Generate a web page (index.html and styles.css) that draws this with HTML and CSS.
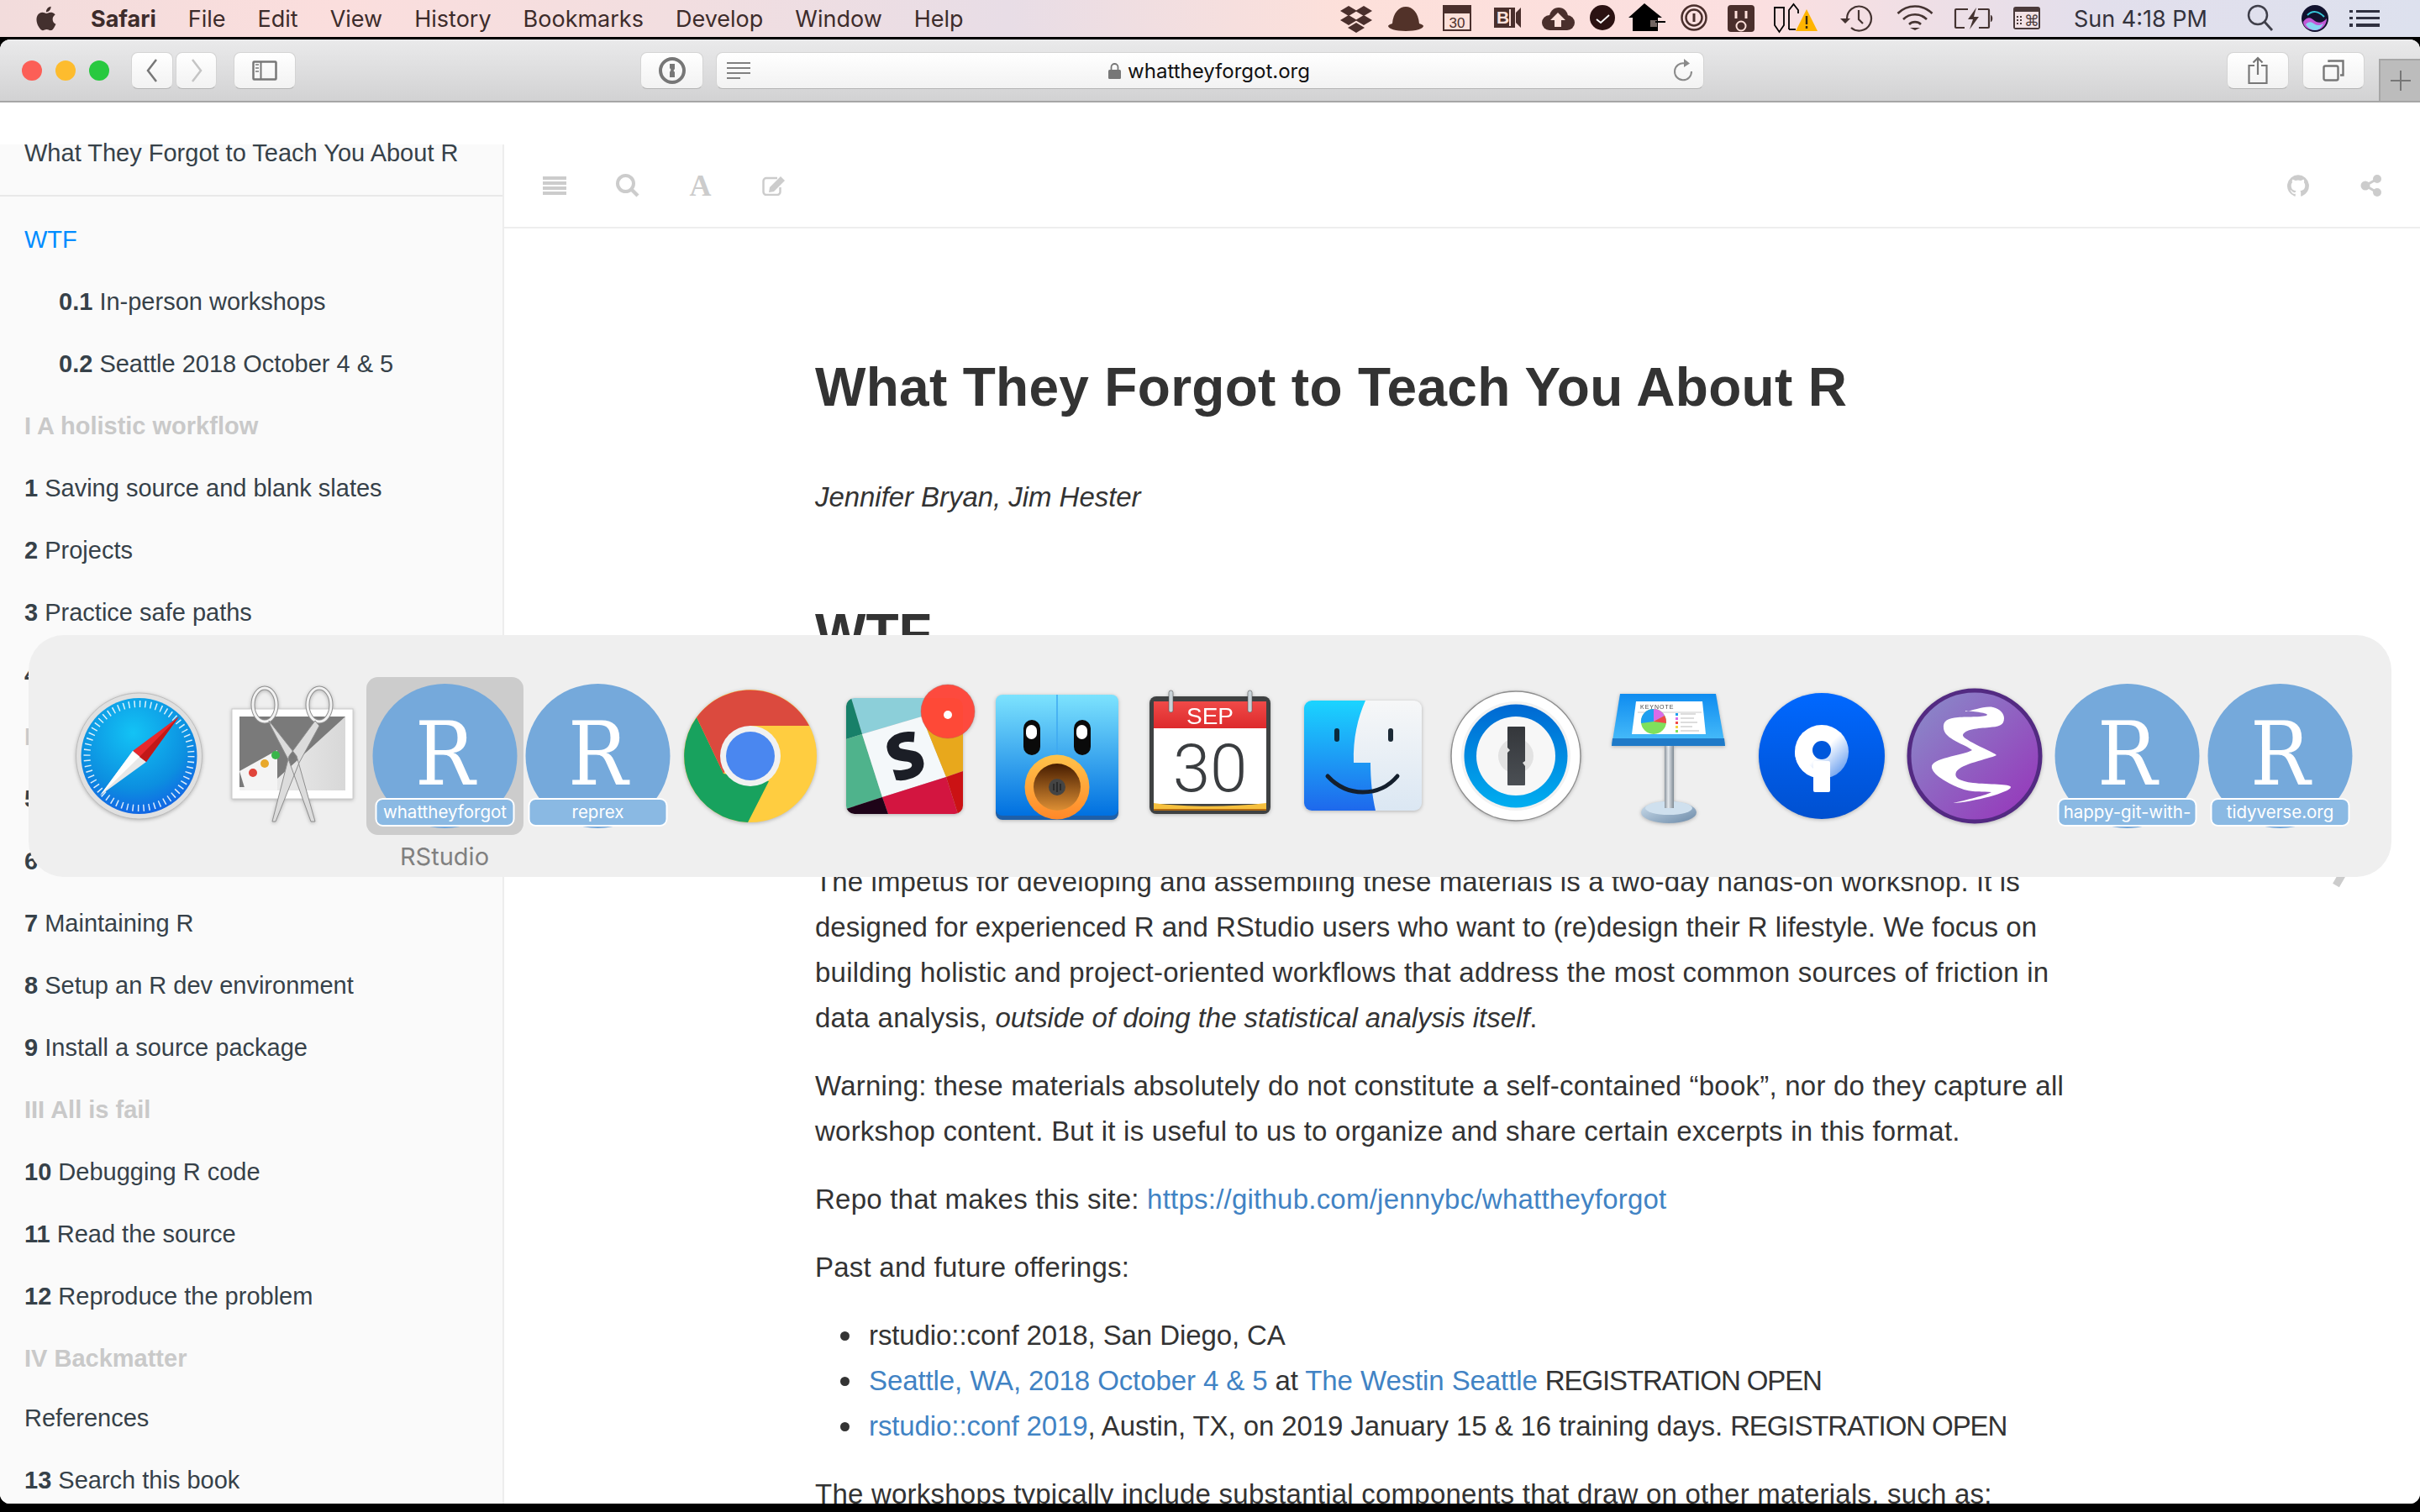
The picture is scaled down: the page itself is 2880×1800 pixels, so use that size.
FILE: index.html
```html
<!DOCTYPE html>
<html lang="en">
  <head>
    <meta charset="UTF-8" />
    <title>What They Forgot to Teach You About R</title>
    <link rel="stylesheet" href="styles.css">
  </head>
  <body>
    <header class="menubar">
      <svg class="apple" viewBox="0 0 24 24" width="34" height="34"><path fill="#43302e" d="M18.71 19.5c-.83 1.24-1.71 2.45-3.05 2.47-1.34.03-1.77-.79-3.29-.79-1.53 0-2 .77-3.27.82-1.31.05-2.3-1.32-3.14-2.53C4.25 17 2.94 12.45 4.7 9.39c.87-1.52 2.43-2.48 4.12-2.51 1.28-.02 2.5.87 3.29.87.78 0 2.26-1.07 3.81-.91.65.03 2.47.26 3.64 1.98-.09.06-2.17 1.28-2.15 3.81.03 3.02 2.65 4.03 2.68 4.04-.03.07-.42 1.44-1.38 2.83M13 3.5c.73-.83 1.94-1.46 2.94-1.5.13 1.17-.34 2.35-1.04 3.19-.69.85-1.83 1.51-2.95 1.42-.15-1.15.41-2.35 1.05-3.11z"/></svg>
      <nav class="menus">
        <b>Safari</b><span>File</span><span>Edit</span><span>View</span><span>History</span><span>Bookmarks</span><span>Develop</span><span>Window</span><span>Help</span>
      </nav>
      <svg class="status" width="850" height="44" viewBox="1590 0 850 44">
        <g fill="#4a2f2c">
          <path d="M1605 7l10 6-10 6-10-6zM1623 7l10 6-10 6-10-6zM1605 18l10 6-10 6-10-6zM1623 18l10 6-10 6-10-6zM1614 27l10 6-10 6-10-6z"/>
          <path fill="#523229" d="M1657 28c1-13 8-20 16-20s15 7 16 20c3 1 5 2 5 3 0 3-9 6-21 6s-21-3-21-6c0-1 2-2 5-3z"/>
          <path d="M1717 6h34v31h-34z"/>
          <path fill="#fde0da" d="M1719 16h30v19h-30z"/>
          <text class="st-num" x="1734" y="33" text-anchor="middle">30</text>
          <path d="M1778 9h25v24h-25zM1804 15l6-6v24l-6-6z"/>
          <text class="st-bi" x="1781" y="28">B</text>
          <path fill="#fde0da" d="M1796 11h2v20h-2z"/>
          <circle cx="1844" cy="27" r="9"/><circle cx="1855" cy="20" r="11"/><circle cx="1865" cy="27" r="9"/>
          <path d="M1844 25h21v11h-21z"/>
          <path fill="#fde0da" d="M1854 15l9 9h-5v8h-8v-8h-5z"/>
          <circle cx="1907" cy="21" r="15" fill="#2b1212"/>
          <path d="M1900 23l5 4 10-9" fill="none" stroke="#fff" stroke-width="1.8"/>
          <path fill="#000" d="M1957 4l21 17h-5v16h-30V21h-5z"/>
          <path d="M1964 24h8v8h-8z" fill="#fde0da" opacity=".45"/>
          <path d="M1970 26h12" stroke="#000" stroke-width="2"/>
          <circle cx="2016" cy="21" r="14.5" fill="none" stroke="#4a2f2c" stroke-width="2.5"/>
          <circle cx="2016" cy="21" r="9.5" fill="none" stroke="#4a2f2c" stroke-width="2.5"/>
          <path d="M2016 16v10" stroke="#4a2f2c" stroke-width="3"/>
          <rect x="2056" y="6" width="32" height="32" rx="4"/>
          <path d="M2066 13v9M2078 13v9" stroke="#fde0da" stroke-width="3"/>
          <circle cx="2072" cy="31" r="5.5" fill="none" stroke="#fde0da" stroke-width="2"/>
        </g>
        <path d="M2112 9h11v21l-5.500 8-5.500-8zM2129 35V12l5.500-7 5.500 7v4" fill="none" stroke="#000" stroke-width="1.800"/>
        <path d="M2129 35h8" stroke="#000" stroke-width="1.800"/>
        <path d="M2150 11l13 26h-26z" fill="#ffb400"/>
        <path d="M2150 19v10M2150 31v3" stroke="#3a2a10" stroke-width="2.400"/>
        <g fill="none" stroke="#443331" stroke-width="2.200">
          <path d="M2198 22a14.500 14.500 0 1 1 5 11M2212 12v11l5 5"/>
          <path stroke-width="2.600" d="M2258.500 16a29 29 0 0 1 41 0M2265 23a20 20 0 0 1 28 0M2272 29a10 10 0 0 1 14 0"/>
          <path d="M2342 11h-14a1 1 0 0 0-1 1v20a1 1 0 0 0 1 1h10M2354 11h12a1 1 0 0 1 1 1v20a1 1 0 0 1-1 1h-11"/>
        </g>
        <path d="M2190 22h12l-6 6z" fill="#443331"/>
        <path d="M2273 33h12l-6 3z" fill="#443331"/>
        <path d="M2352 9l-10 14h6l-4 12 11-15h-6z" fill="#443331"/>
        <path d="M2369 18c3 0 3 8 0 8z" fill="#443331"/>
        <rect x="2396" y="8" width="32" height="27" rx="3" fill="#4a3a3a"/>
        <rect x="2398" y="14" width="28" height="19" fill="#f2e2e6"/>
        <text class="st-cmd" x="2418" y="31" text-anchor="middle">⌘</text>
        <path d="M2401 19v12M2405 19v12" stroke="#4a3a3a" stroke-width="2" stroke-dasharray="2 2"/>
      </svg>
      <time class="clock">Sun 4:18 PM</time>
      <svg class="tray-search" width="32" height="34" viewBox="0 0 32 34"><circle cx="13" cy="13" r="11" fill="none" stroke="#3f3f4a" stroke-width="2.500"/><path d="M21 21l9 10" stroke="#3f3f4a" stroke-width="2.800"/></svg>
      <svg class="siri" width="34" height="34" viewBox="0 0 34 34">
        <circle cx="17" cy="17" r="16" fill="#11122e"/>
        <path d="M3 21c6-8 10-4 14-1s10 2 14-3c0 8-6 14-14 14S3 27 3 21z" fill="#c15ad6"/>
        <path d="M6 24c5-5 8-2 11 0s7 1 10-1c-2 5-6 8-10 8s-9-3-11-7z" fill="#87d6f2"/>
        <path d="M8 13c6-6 13-5 20 2" fill="none" stroke="#36c6d8" stroke-width="2"/>
      </svg>
      <svg class="tray-list" width="36" height="20" viewBox="0 0 36 20"><path fill="#2f3040" d="M0 0h4v3H0zM8 0h28v3H8zM0 8h4v3H0zM8 8h28v3H8zM0 16h4v4H0zM8 16h28v4H8z"/></svg>
    </header>

    <div class="window">
      <div class="toolbar">
        <span class="light red"></span><span class="light yellow"></span><span class="light green"></span>
        <button class="btn back"><svg width="16" height="30" viewBox="0 0 16 30"><path d="M13 2L3 15l10 13" fill="none" stroke="#777" stroke-width="2.500"/></svg></button>
        <button class="btn forward"><svg width="16" height="30" viewBox="0 0 16 30"><path d="M3 2l10 13L3 28" fill="none" stroke="#c4c4c4" stroke-width="2.500"/></svg></button>
        <button class="btn sidebar-toggle"><svg width="30" height="24" viewBox="0 0 30 24"><rect x="1.500" y="1.500" width="27" height="21" rx="1" fill="none" stroke="#777" stroke-width="2.500"/><path d="M10.500 2v20" stroke="#777" stroke-width="2"/><path d="M4 5h4M4 9h4M4 13h4" stroke="#999" stroke-width="2"/></svg></button>
        <button class="btn onepass"><svg width="32" height="32" viewBox="0 0 32 32"><circle cx="16" cy="16" r="14" fill="none" stroke="#777" stroke-width="4"/><path fill="#777" d="M13 8h6v6l-1.500 2 1.500 2v6h-6v-6l1.500-3L13 13z"/></svg></button>
        <div class="urlbar">
          <svg class="reader" width="28" height="20" viewBox="0 0 28 20"><path d="M0 1h28M0 7h28M0 13h28M0 19h16" stroke="#808080" stroke-width="2"/></svg>
          <span class="address">
            <svg width="15" height="19" viewBox="0 0 15 19"><path d="M3.500 8V5a4 4 0 0 1 8 0v3" fill="none" stroke="#777" stroke-width="1.800"/><rect x="0" y="8" width="15" height="11" rx="1.500" fill="#777"/></svg>
            whattheyforgot.org
          </span>
          <svg class="reload" width="24" height="28" viewBox="0 0 24 28"><path d="M14 5.500a10 10 0 1 0 8 9.500" fill="none" stroke="#8a8a8a" stroke-width="2"/><path d="M13 0l7 5.500-7 4.500z" fill="#8a8a8a"/></svg>
        </div>
        <button class="btn share"><svg width="24" height="34" viewBox="0 0 24 34"><path d="M8 11H1.500v21h21V11H16M12 22V2M6.500 7.500L12 2l5.500 5.500" fill="none" stroke="#777" stroke-width="2.200"/></svg></button>
        <button class="btn tabs"><svg width="26" height="26" viewBox="0 0 26 26"><rect x="1.500" y="7.500" width="17" height="17" rx="2" fill="none" stroke="#777" stroke-width="2.400"/><path d="M7.500 3V1.500h17v17H21" fill="none" stroke="#777" stroke-width="2.400"/></svg></button>
        <div class="newtab"><svg width="24" height="24" viewBox="0 0 24 24"><path d="M12 0v24M0 12h24" stroke="#777" stroke-width="2"/></svg></div>
      </div>

      <div class="page">
        <aside class="summary">
          <div class="book-title">What They Forgot to Teach You About R</div>
          <ul class="chapters">
            <li class="active">WTF</li>
            <li class="sub"><b>0.1</b> In-person workshops</li>
            <li class="sub"><b>0.2</b> Seattle 2018 October 4 &amp; 5</li>
            <li class="part">I A holistic workflow</li>
            <li><b>1</b> Saving source and blank slates</li>
            <li><b>2</b> Projects</li>
            <li><b>3</b> Practice safe paths</li>
            <li><b>4</b> Project-oriented workflow</li>
            <li class="part">II Personal R administration</li>
            <li><b>5</b> R startup</li>
            <li><b>6</b> Tricks</li>
            <li><b>7</b> Maintaining R</li>
            <li><b>8</b> Setup an R dev environment</li>
            <li><b>9</b> Install a source package</li>
            <li class="part">III All is fail</li>
            <li><b>10</b> Debugging R code</li>
            <li><b>11</b> Read the source</li>
            <li><b>12</b> Reproduce the problem</li>
            <li class="part">IV Backmatter</li>
            <li class="refs">References</li>
            <li><b>13</b> Search this book</li>
          </ul>
        </aside>

        <main class="body">
          <div class="book-tools">
            <span class="tool"><svg width="28" height="22" viewBox="0 0 28 22"><path fill="#ccc" d="M0 0h28v4H0zM0 6h28v4H0zM0 12h28v4H0zM0 18h28v4H0z"/></svg></span>
            <span class="tool"><svg width="28" height="28" viewBox="0 0 28 28"><circle cx="11.500" cy="11.500" r="9.500" fill="none" stroke="#ccc" stroke-width="4"/><path d="M18 18l8 8" stroke="#ccc" stroke-width="4.500"/></svg></span>
            <span class="tool tool-a">A</span>
            <span class="tool"><svg width="28" height="24" viewBox="0 0 28 24"><path d="M18 3H5a3.500 3.500 0 0 0-3.500 3.500v13A3.500 3.500 0 0 0 5 23h13a3.500 3.500 0 0 0 3.500-3.500V14" fill="none" stroke="#ccc" stroke-width="2.500"/><path fill="#ccc" d="M9 14L22 1l5 5-13 13-6 1z"/></svg></span>
            <span class="tools-right">
              <span class="tool"><svg width="26" height="26" viewBox="0 0 24 24"><path fill="#ccc" d="M12 .3a12 12 0 0 0-3.800 23.380c.6.12.83-.26.83-.57L9 21.070c-3.340.72-4.040-1.610-4.040-1.610-.55-1.390-1.340-1.760-1.340-1.760-1.080-.74.09-.73.09-.73 1.200.09 1.830 1.240 1.830 1.240 1.080 1.830 2.810 1.300 3.500 1 .1-.78.42-1.310.76-1.610-2.670-.3-5.470-1.330-5.470-5.930 0-1.310.47-2.380 1.240-3.220-.14-.3-.54-1.520.1-3.180 0 0 1-.32 3.300 1.230a11.500 11.500 0 0 1 6 0c2.280-1.550 3.290-1.230 3.290-1.230.64 1.660.24 2.880.12 3.180a4.650 4.650 0 0 1 1.230 3.220c0 4.610-2.800 5.630-5.480 5.920.42.36.81 1.100.81 2.220l-.01 3.290c0 .31.2.69.82.57A12 12 0 0 0 12 .3"/></svg></span>
              <span class="tool"><svg width="26" height="26" viewBox="0 0 26 26"><path d="M20 5L6 13l14 8" fill="none" stroke="#ccc" stroke-width="3"/><circle cx="20" cy="5" r="5" fill="#ccc"/><circle cx="6" cy="13" r="5.500" fill="#ccc"/><circle cx="20" cy="21" r="5" fill="#ccc"/></svg></span>
            </span>
          </div>

          <article class="inner">
            <h1>What They Forgot to Teach You About R</h1>
            <p class="author"><em>Jennifer Bryan, Jim Hester</em></p>
            <h2>WTF</h2>
            <p><span class="tight">The impetus for developing and assembling these materials is a two-day hands-on workshop. It is</span><br><span class="tighter">designed for experienced R and RStudio users who want to (re)design their R lifestyle. We focus on</span><br>building holistic and project-oriented workflows that address the most common sources of friction in<br>data analysis, <em>outside of doing the statistical analysis itself</em>.</p>
            <p>Warning: these materials absolutely do not constitute a self-contained “book”, nor do they capture all<br>workshop content. But it is useful to us to organize and share certain excerpts in this format.</p>
            <p>Repo that makes this site: <a href="#">https://github.com/jennybc/whattheyforgot</a></p>
            <p>Past and future offerings:</p>
            <ul>
              <li>rstudio::conf 2018, San Diego, CA</li>
              <li><a href="#">Seattle, WA, 2018 October 4 &amp; 5</a> at <a href="#">The Westin Seattle</a> <span class="caps">REGISTRATION OPEN</span></li>
              <li><a href="#">rstudio::conf 2019</a>, Austin, TX, on 2019 January 15 &amp; 16 training days. <span class="caps">REGISTRATION OPEN</span></li>
            </ul>
            <p>The workshops typically include substantial components that draw on other materials, such as:</p>
          </article>

          <svg class="next-page" width="40" height="110" viewBox="0 0 40 110"><path d="M4 4l30 50L4 106" fill="none" stroke="#ccc" stroke-width="9"/></svg>
        </main>
      </div>
    </div>

    <!-- cmd-tab switcher -->
    <div class="switcher">
      <svg class="defs" width="0" height="0">
        <g id="r-app">
          <circle cx="91.500" cy="94" r="86" fill="#75a9db"/>
          <text class="r-letter" transform="translate(91.500 128) scale(.9 1)" text-anchor="middle">R</text>
          <rect x="9.500" y="145" width="164" height="32" rx="8" fill="#8ab9e3" stroke="#fff" stroke-width="2"/>
        </g>
      </svg>

      <div class="app">
        <svg viewBox="0 0 182 188">
          <defs><radialGradient id="saf" cx=".45" cy=".3" r=".8"><stop offset="0" stop-color="#13c3f5"/><stop offset=".6" stop-color="#0c8fe0"/><stop offset="1" stop-color="#1454e6"/></radialGradient></defs>
          <circle cx="91.500" cy="94" r="75" fill="#e0e0e0" stroke="#bbb"/>
          <circle cx="91.500" cy="94" r="69" fill="url(#saf)"/>
          <circle cx="91.500" cy="94" r="62" fill="none" stroke="#fff" stroke-opacity=".85" stroke-width="8" stroke-dasharray="1.500 4.990"/>
          <path d="M139 47L84 88l16 13z" fill="#e8282c"/>
          <path d="M45 141l39-53 16 13z" fill="#e8e8e8"/>
          <path d="M139 47L92 95l8 6z" fill="#c21818"/>
          <path d="M45 141l47-46-8-7z" fill="#fff"/>
        </svg>
      </div>

      <div class="app">
        <svg viewBox="0 0 182 188">
          <defs><linearGradient id="snapr" x1="0" x2="1"><stop offset="0" stop-color="#f2f2f2"/><stop offset="1" stop-color="#d8d8d8"/></linearGradient></defs>
          <rect x="20" y="38" width="144" height="107" fill="#fff" stroke="#ccc"/>
          <rect x="29" y="47" width="126" height="88" fill="url(#snapr)"/>
          <path d="M29 47h126l-92 84H29z" fill="#7a7a7a"/>
          <path d="M29 112l45-25 0 48H36z" fill="#f4f4f4"/>
          <circle cx="45" cy="114" r="5" fill="#e0443a"/><circle cx="59" cy="103" r="5" fill="#e8a82a"/><circle cx="72" cy="93" r="5" fill="#39b54a"/>
          <g fill="none">
            <ellipse cx="59" cy="33" rx="14" ry="20" stroke="#8e8e8e" stroke-width="5"/>
            <ellipse cx="124" cy="33" rx="14" ry="20" stroke="#8e8e8e" stroke-width="5"/>
            <ellipse cx="59" cy="33" rx="14" ry="20" stroke="#f2f2f2" stroke-width="3"/>
            <ellipse cx="124" cy="33" rx="14" ry="20" stroke="#f2f2f2" stroke-width="3"/>
          </g>
          <path d="M64 52l33 42 22 78-5 0-26-72-22-42zM119 52L88 94 68 172l4 0 28-70 24-44z" fill="#dcdcdc" stroke="#8e8e8e"/>
          <circle cx="92" cy="94" r="3" fill="#777"/>
        </svg>
      </div>

      <div class="app selected">
        <svg class="flat" viewBox="0 0 182 188"><use href="#r-app"/><text class="r-label" x="91.500" y="168" text-anchor="middle">whattheyforgot</text></svg>
        <div class="app-name">RStudio</div>
      </div>

      <div class="app">
        <svg class="flat" viewBox="0 0 182 188"><use href="#r-app"/><text class="r-label" x="91.500" y="168" text-anchor="middle">reprex</text></svg>
      </div>

      <div class="app">
        <svg viewBox="0 0 182 188">
          <circle cx="91" cy="94" r="79" fill="#ffcd40"/>
          <path d="M27 48A79 79 0 0 0 88 173L113 124 59 115z" fill="#18a25e"/>
          <path d="M27 48A79 79 0 0 1 161 58H91L59 115z" fill="#db4a3e"/>
          <circle cx="91" cy="94" r="36" fill="#f1f1f1"/>
          <circle cx="91" cy="94" r="29" fill="#4a87f0"/>
        </svg>
      </div>

      <div class="app">
        <svg viewBox="0 0 182 188">
          <defs><clipPath id="slk"><rect x="23" y="25" width="139" height="138" rx="10"/></clipPath></defs>
          <g clip-path="url(#slk)">
            <path fill="#8ccfd9" d="M29 25h87l-3 22-71 21z"/>
            <path fill="#178069" d="M23 25h6l13 43-19 6z"/>
            <path fill="#4fb38c" d="M23 74l19-6 24 75-43 14z"/>
            <path fill="#f4f8fa" d="M42 68l71-21 29 72-76 24z"/>
            <path fill="#e8a81c" d="M116 25h46v87l-20 7-29-72z"/>
            <path fill="#d31540" d="M66 143l76-24 14 44H73z"/>
            <path fill="#1e0318" d="M23 157l43-14 7 20H23z"/>
            <path fill="#cb1214" d="M142 119l20-7v51h-6z"/>
          </g>
          <text class="slack-s" x="93" y="121" text-anchor="middle" transform="rotate(-17 93 94)">S</text>
          <circle cx="144" cy="41" r="32" fill="#ff4538" fill-opacity=".96" stroke="#b8564c" stroke-opacity=".4"/>
          <circle cx="144" cy="45" r="5" fill="#fff"/>
        </svg>
      </div>

      <div class="app">
        <svg viewBox="0 0 182 188">
          <defs>
            <linearGradient id="twb" x1="0" x2="0" y1="0" y2="1"><stop offset="0" stop-color="#7de3fe"/><stop offset="1" stop-color="#0070e0"/></linearGradient>
            <linearGradient id="twm" x1="0" x2="0" y1="0" y2="1"><stop offset="0" stop-color="#ffc34a"/><stop offset="1" stop-color="#ff8829"/></linearGradient>
            <linearGradient id="twi" x1="0" x2="0" y1="0" y2="1"><stop offset="0" stop-color="#461c00"/><stop offset="1" stop-color="#dd8f34"/></linearGradient>
          </defs>
          <rect x="19" y="24" width="146" height="146" rx="8" fill="#1e5fa8"/>
          <rect x="19" y="21" width="146" height="144" rx="8" fill="url(#twb)"/>
          <path d="M92 21v90" stroke="#3ea8f0" stroke-width="1.500"/>
          <rect x="52" y="51" width="20" height="42" rx="10" fill="#0a0a0a"/>
          <rect x="112" y="51" width="20" height="42" rx="10" fill="#0a0a0a"/>
          <rect x="55" y="57" width="13" height="17" rx="6.500" fill="#fff"/>
          <rect x="115" y="57" width="13" height="17" rx="6.500" fill="#fff"/>
          <circle cx="92" cy="131" r="38.500" fill="url(#twm)"/>
          <circle cx="92" cy="131" r="28" fill="url(#twi)"/>
          <circle cx="92" cy="131" r="10" fill="#444"/>
          <path d="M88 127v8M92 125v12M96 127v8" stroke="#222" stroke-width="1.500"/>
        </svg>
      </div>

      <div class="app">
        <svg viewBox="0 0 182 188">
          <defs><linearGradient id="fred" x1="0" x2="0" y1="0" y2="1"><stop offset="0" stop-color="#f04a48"/><stop offset="1" stop-color="#dd2a2c"/></linearGradient></defs>
          <rect x="20" y="23" width="144" height="140" rx="8" fill="#3f4142"/>
          <rect x="25" y="29" width="134" height="32" fill="url(#fred)"/>
          <rect x="25" y="61" width="134" height="90" fill="#fff"/>
          <path d="M25 150c40 5 90 5 134 0v8H25z" fill="#f6c03e"/>
          <path d="M25 157h134v2H25z" fill="#b26a10"/>
          <rect x="43" y="16" width="5" height="26" rx="2.500" fill="#c9d3d8" stroke="#555" stroke-width=".6"/>
          <rect x="137" y="16" width="5" height="26" rx="2.500" fill="#c9d3d8" stroke="#555" stroke-width=".6"/>
          <text class="cal-month" x="92" y="56" text-anchor="middle">SEP</text>
          <text class="cal-day" x="92" y="136" text-anchor="middle">30</text>
        </svg>
      </div>

      <div class="app">
        <svg viewBox="0 0 182 188">
          <defs>
            <linearGradient id="fnl" x1="0" x2="0" y1="0" y2="1"><stop offset="0" stop-color="#1bd4ff"/><stop offset="1" stop-color="#1e68ec"/></linearGradient>
            <linearGradient id="fnr" x1="0" x2="0" y1="0" y2="1"><stop offset="0" stop-color="#f6f7f8"/><stop offset="1" stop-color="#dbe7f3"/></linearGradient>
            <clipPath id="fnc"><rect x="22" y="28" width="140" height="131" rx="9"/></clipPath>
          </defs>
          <g clip-path="url(#fnc)">
            <rect x="22" y="28" width="140" height="131" fill="url(#fnr)"/>
            <path d="M22 28h73c-9 20-15 45-14 74h20c0 20 2 40 6 57H22z" fill="url(#fnl)"/>
          </g>
          <rect x="58" y="61" width="6" height="16" rx="3" fill="#0b2a3c"/>
          <rect x="122" y="61" width="6" height="16" rx="3" fill="#1c2a36"/>
          <path d="M50 118c12 13 26 19 42 19s30-6 41-19" fill="none" stroke="#141f2d" stroke-width="5" stroke-linecap="round"/>
        </svg>
      </div>

      <div class="app">
        <svg viewBox="0 0 182 188">
          <defs>
            <linearGradient id="opb" x1="0" x2="0" y1="0" y2="1"><stop offset="0" stop-color="#0068d2"/><stop offset="1" stop-color="#00aef0"/></linearGradient>
            <linearGradient id="opk" x1="0" x2="0" y1="0" y2="1"><stop offset="0" stop-color="#34373b"/><stop offset="1" stop-color="#4b4f54"/></linearGradient>
          </defs>
          <circle cx="92" cy="94" r="77" fill="#fff" stroke="#8f8f8f" stroke-width="1.500"/>
          <circle cx="92" cy="94" r="65" fill="#f2f2f2"/>
          <circle cx="92" cy="94" r="61.500" fill="url(#opb)"/>
          <circle cx="92" cy="94" r="47" fill="#f7f7f7"/>
          <circle cx="92" cy="94" r="21" fill="#e2e2e2"/>
          <path d="M82 60a1 1 0 0 1 1-1h19a1 1 0 0 1 1 1v40l-3 2 3 4v22a1 1 0 0 1-1 1H83a1 1 0 0 1-1-1V90l3-3-3-3z" fill="url(#opk)"/>
        </svg>
      </div>

      <div class="app">
        <svg viewBox="0 0 182 188">
          <defs>
            <linearGradient id="kbd" x1="0" x2="0" y1="0" y2="1"><stop offset="0" stop-color="#0f8cf0"/><stop offset="1" stop-color="#4cc0fa"/></linearGradient>
            <linearGradient id="kst" x1="0" x2="1"><stop offset="0" stop-color="#8a939c"/><stop offset=".4" stop-color="#e4e8ec"/><stop offset="1" stop-color="#7f8a94"/></linearGradient>
            <linearGradient id="kbs" x1="0" x2="1" y1="0" y2="1"><stop offset="0" stop-color="#cfe0ee"/><stop offset="1" stop-color="#6c8aa8"/></linearGradient>
          </defs>
          <rect x="87" y="80" width="11" height="70" fill="url(#kst)"/>
          <ellipse cx="92" cy="161" rx="33" ry="13" fill="url(#kbs)"/>
          <ellipse cx="92" cy="156" rx="28" ry="8" fill="#cfe0ee"/>
          <rect x="87" y="130" width="11" height="26" fill="url(#kst)"/>
          <path d="M34 20h114l11 62H24z" fill="url(#kbd)"/>
          <path d="M25 73h133l1 9H24z" fill="#1f7ac8"/>
          <path d="M53 29h79l4 39H48z" fill="#fff"/>
          <text class="key-title" x="58" y="38">KEYNOTE</text>
          <path d="M55 42h76" stroke="#ccc"/>
          <circle cx="74" cy="53" r="15" fill="#7fe05c"/>
          <path d="M74 53V38a15 15 0 0 0-15 17z" fill="#1f9ff0"/>
          <path d="M74 53V38a15 15 0 0 1 13 8z" fill="#d96be8"/>
          <path d="M74 53l13-7a15 15 0 0 1 2 9z" fill="#f04848"/>
          <path d="M100 43h3v3h-3z" fill="#1f9ff0"/><path d="M100 48h3v3h-3z" fill="#d96be8"/><path d="M100 53h3v3h-3z" fill="#f04848"/><path d="M100 58h3v3h-3z" fill="#f4d13c"/><path d="M100 63h3v3h-3z" fill="#7fe05c"/>
          <path d="M106 44h18M106 49h16M106 54h20M106 59h14M106 64h22" stroke="#bbb" stroke-width="1.200"/>
        </svg>
      </div>

      <div class="app">
        <svg viewBox="0 0 182 188">
          <defs>
            <linearGradient id="srb" x1="0" x2="0" y1="0" y2="1"><stop offset="0" stop-color="#0068ff"/><stop offset="1" stop-color="#0050d0"/></linearGradient>
            <linearGradient id="srk" x1="0" x2="1" y1="0" y2="1"><stop offset=".5" stop-color="#fff"/><stop offset="1" stop-color="#fff" stop-opacity=".25"/></linearGradient>
          </defs>
          <circle cx="92" cy="94" r="75" fill="url(#srb)"/>
          <circle cx="92" cy="89" r="32" fill="url(#srk)"/>
          <rect x="82" y="100" width="20" height="37" rx="2" fill="#fff"/>
          <path d="M60 89a32 32 0 0 0 22 30v-10z" fill="#fff"/>
          <circle cx="92" cy="87" r="11" fill="#0058dc"/>
        </svg>
      </div>

      <div class="app">
        <svg viewBox="0 0 182 188">
          <defs><linearGradient id="emc" x1="0" x2="1" y1="0" y2="1"><stop offset=".1" stop-color="#8a86c8"/><stop offset=".9" stop-color="#963abb"/></linearGradient></defs>
          <circle cx="92" cy="94" r="78" fill="url(#emc)" stroke="#532a82" stroke-width="5"/>
          <path fill="#fff" d="M81 41c10-1 22-7 33-5 9 2 13 8 13 13 0 9-7 10-18 11-12 1-29 2-31 9-2 5 40 22 40 24-10 5-42 10-48 20-3 7 4 11 20 13 18 2 45 1 45 5 0 6-45 18-69 19 14-3 42-10 46-13-8-1-24 1-38-5-10-4-31-14-33-24-2-12 36-14 48-21-8-7-33-13-34-26-1-9 5-12 17-13 12-1 33 0 35-3 1-2-14-4-26-5z"/>
        </svg>
      </div>

      <div class="app">
        <svg class="flat" viewBox="0 0 182 188"><use href="#r-app"/><text class="r-label" x="91.500" y="168" text-anchor="middle">happy-git-with-</text></svg>
      </div>

      <div class="app">
        <svg class="flat" viewBox="0 0 182 188"><use href="#r-app"/><text class="r-label" x="91.500" y="168" text-anchor="middle">tidyverse.org</text></svg>
      </div>
    </div>
  </body>
</html>
```

FILE: styles.css
```css
html,
body {
  margin: 0;
  height: 100%;
}
body {
  position: relative;
  width: 2880px;
  height: 1800px;
  overflow: hidden;
  background: #000;
  font-family: "Liberation Sans", Arial, sans-serif;
  color: #333;
}

/* macOS menu bar */
.menubar {
  display: flex;
  align-items: center;
  height: 44px;
  padding-left: 38px;
  box-sizing: border-box;
  background: linear-gradient(90deg, #f2dcdc 0, #fbdedd 400px, #f2dee0 800px, #e8dde6 1200px, #fde0da 1600px, #fbdfe0 2100px, #e2dfec 2500px, #dde1ee 100%);
  font-family: Inter, "Liberation Sans", sans-serif;
  color: #3d2c2b;
  font-size: 27px;
}
.apple {
  width: 34px;
  flex: none;
}
.menus {
  display: flex;
  gap: 38px;
  margin-left: 36px;
  width: 1482px;
}
.status {
  flex: none;
}
.st-num {
  font: 17px "Liberation Sans", sans-serif;
  fill: #4a2f2c;
}
.st-bi {
  font: bold 21px "Liberation Sans", sans-serif;
  fill: #fde0da;
}
.st-cmd {
  font: 18px "DejaVu Sans", sans-serif;
  fill: #4a3a3a;
}
.clock {
  margin-left: 28px;
  width: 196px;
  color: #33323c;
}
.tray-search {
  margin-left: 10px;
}
.siri {
  margin-left: 32px;
}
.tray-list {
  margin-left: 24px;
}

/* Safari window */
.window {
  margin-top: 3px;
  height: 1743px;
  display: flex;
  flex-direction: column;
  border-radius: 12px;
  overflow: hidden;
  background: #fff;
}
.toolbar {
  position: relative;
  display: flex;
  align-items: flex-start;
  flex: none;
  height: 75px;
  box-sizing: border-box;
  padding: 15px 0 0 26px;
  border-bottom: 2px solid #a6a6a6;
  background: linear-gradient(#eaeaeb, #d2d2d3);
}
.light {
  width: 24px;
  height: 24px;
  margin: 10px 16px 0 0;
  border-radius: 50%;
}
.red {
  background: #fc5f57;
}
.yellow {
  background: #fdbc2e;
}
.green {
  background: #28c93f;
}
.btn {
  display: flex;
  align-items: center;
  justify-content: center;
  height: 44px;
  padding: 0;
  box-sizing: border-box;
  border: 1px solid #d4d4d4;
  border-bottom-color: #b4b4b4;
  border-radius: 8px;
  background: linear-gradient(#fff, #f2f2f2);
}
.back {
  width: 50px;
  margin-left: 10px;
}
.forward {
  width: 49px;
  margin-left: 3px;
}
.sidebar-toggle {
  width: 74px;
  margin-left: 20px;
}
.onepass {
  width: 75px;
  margin-left: 410px;
}
.urlbar {
  display: flex;
  align-items: center;
  position: relative;
  width: 1176px;
  height: 44px;
  margin-left: 15px;
  padding: 0 12px;
  box-sizing: border-box;
  border: 1px solid #d4d4d4;
  border-bottom-color: #b4b4b4;
  border-radius: 8px;
  background: linear-gradient(#fff, #f2f2f2);
}
.address {
  flex: 1;
  display: flex;
  align-items: center;
  justify-content: center;
  gap: 8px;
  padding-right: 6px;
  font-family: Inter, "Liberation Sans", sans-serif;
  font-size: 24px;
  color: #111;
}
.share {
  width: 74px;
  margin-left: 622px;
}
.tabs {
  width: 74px;
  margin-left: 16px;
}
.newtab {
  display: flex;
  align-items: center;
  justify-content: center;
  position: absolute;
  right: 0;
  bottom: 0;
  width: 49px;
  height: 50px;
  box-sizing: border-box;
  border: 2px solid #a6a6a6;
  border-bottom: 0;
  border-right: 0;
  background: #bcbcbc;
}

/* book page */
.page {
  flex: 1;
  min-height: 0;
  display: flex;
  background: #fff;
}
.summary {
  flex: none;
  width: 600px;
  margin-top: 50px;
  box-sizing: border-box;
  border-right: 2px solid #ededed;
  background: #fafafa;
  color: #364149;
  font-size: 29px;
}
.book-title {
  height: 60px;
  padding-left: 29px;
  line-height: 20px;
  border-bottom: 2px solid #e8e8e8;
}
.chapters {
  list-style: none;
  margin: 0;
  padding: 14px 0 0 29px;
}
.chapters li {
  height: 74px;
  line-height: 74px;
  white-space: nowrap;
}
.chapters .sub {
  padding-left: 41px;
}
.chapters .active {
  color: #008cff;
}
.chapters .part {
  font-weight: bold;
  color: #c9c9c9;
}
.chapters .refs {
  margin-top: -3px;
}

.body {
  position: relative;
  flex: 1;
  min-width: 0;
  overflow: hidden;
}
.book-tools {
  display: flex;
  align-items: center;
  height: 150px;
  box-sizing: border-box;
  padding: 50px 15px 0 16px;
  border-bottom: 2px solid #eee;
}
.tool {
  display: flex;
  align-items: center;
  justify-content: center;
  width: 87px;
}
.tool-a {
  font: bold 36px "Liberation Serif", serif;
  color: #ccc;
}
.tools-right {
  display: flex;
  margin-left: auto;
}
.inner {
  padding: 149px 0 0 370px;
  font-size: 33px;
  letter-spacing: .23px;
  line-height: 54px;
}
.inner h1 {
  margin: 0 0 64px;
  font-size: 64px;
  letter-spacing: .3px;
  line-height: 80px;
}
.inner .author {
  margin: 0 0 95px;
}
.inner h2 {
  margin: 0 0 229px;
  font-size: 64px;
  letter-spacing: 0;
  line-height: 80px;
}
.inner p {
  margin: 0 0 27px;
  white-space: nowrap;
}
.inner em {
  letter-spacing: -.05px;
}
.tight {
  letter-spacing: .11px;
}
.tighter {
  letter-spacing: 0;
}
.inner ul {
  list-style: none;
  margin: 0 0 27px;
  padding: 0 0 0 64px;
}
.inner li {
  position: relative;
  letter-spacing: -.1px;
}
.inner li::before {
  content: "";
  position: absolute;
  left: -34px;
  top: 22px;
  width: 11px;
  height: 11px;
  border-radius: 50%;
  background: #333;
}
.inner .caps {
  letter-spacing: -1.100px;
}
.inner a {
  color: #4183c4;
  text-decoration: none;
}
.next-page {
  position: absolute;
  right: 64px;
  top: 826px;
}

/* application switcher, floats over the page */
.switcher {
  position: absolute;
  left: 34px;
  top: 756px;
  width: 2812px;
  height: 288px;
  box-sizing: border-box;
  padding: 50px 42px 0 40px;
  display: grid;
  grid-template-columns: repeat(15, 182px);
  align-items: start;
  border-radius: 42px;
  background: #efefef;
}
.defs {
  position: absolute;
}
.app {
  position: relative;
  height: 188px;
}
.app svg {
  position: relative;
  display: block;
  width: 182px;
  height: 188px;
  overflow: visible;
  filter: drop-shadow(0 1px 2px rgba(0, 0, 0, .25));
}
.app svg.flat {
  filter: none;
}
.app.selected::before {
  content: "";
  position: absolute;
  top: 0;
  bottom: 0;
  left: -2px;
  right: -3px;
  border-radius: 14px;
  background: #ccc;
}
.app-name {
  position: absolute;
  top: 196px;
  left: 0;
  right: 0;
  text-align: center;
  font-family: Inter, "Liberation Sans", sans-serif;
  font-size: 29px;
  line-height: 36px;
  color: #808080;
}
.r-letter {
  font: 105px "DejaVu Serif", "Liberation Serif", serif;
  fill: #fff;
}
.r-label {
  font: 20.500px Inter, "Liberation Sans", sans-serif;
  fill: #fff;
}
.slack-s {
  font: 800 76px "Open Sans", "Liberation Sans", sans-serif;
  fill: #1b1e26;
}
.cal-month {
  font: 28px "Liberation Sans", sans-serif;
  fill: #fff;
}
.cal-day {
  font: 300 80px Roboto, "Liberation Sans", sans-serif;
  fill: #3a3d40;
}
.key-title {
  font: 7px "Liberation Sans", sans-serif;
  letter-spacing: 1px;
  fill: #444;
}
```
